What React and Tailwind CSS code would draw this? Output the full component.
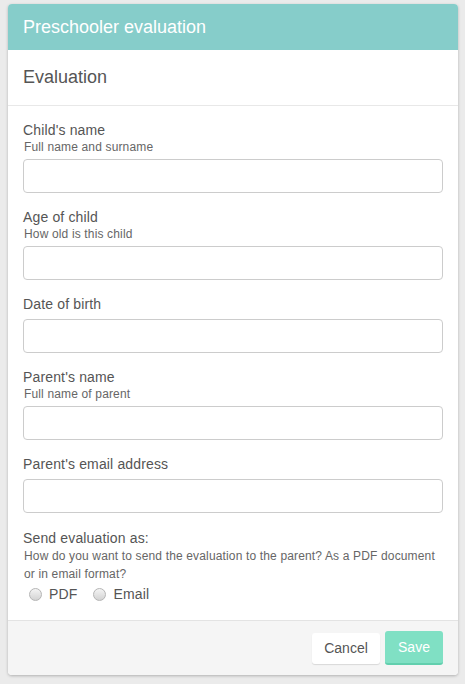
import { useState } from 'react';

const fields = [
  { label: "Child's name", help: 'Full name and surname' },
  { label: 'Age of child', help: 'How old is this child' },
  { label: 'Date of birth' },
  { label: "Parent's name", help: 'Full name of parent' },
  { label: "Parent's email address" },
];

function Radio({ label, checked, onClick }) {
  return (
    <label className="flex items-center cursor-pointer" onClick={onClick}>
      <span className="w-[13px] h-[13px] rounded-full border border-[#b5b5b5] bg-gradient-to-b from-[#f4f4f4] to-[#d3d3d3] flex items-center justify-center">
        {checked && <span className="w-[5px] h-[5px] rounded-full bg-[#555]" />}
      </span>
      <span className="ml-[7px] text-[14px] leading-[20px] tracking-[0.15px] text-[#555]">{label}</span>
    </label>
  );
}

export default function App() {
  const [format, setFormat] = useState('');

  return (
    <div
      className="w-[465px] h-[684px] bg-[#ebebeb] pt-[4px] pl-[8px]"
      style={{ fontFamily: '"Liberation Sans", Arial, sans-serif' }}
    >
      <div className="w-[450px] h-[671px] bg-white rounded-[4px] shadow-[0_1px_3px_rgba(0,0,0,0.25)] flex flex-col overflow-hidden">
        <div className="h-[46px] bg-[#86cdca] flex items-center px-[15px]">
          <h1 className="text-[18px] text-white">Preschooler evaluation</h1>
        </div>
        <div className="h-[56px] border-b border-[#e8e8e8] flex items-center px-[15px]">
          <h2 className="text-[18px] text-[#555]">Evaluation</h2>
        </div>

        <div className="flex-1 px-[15px] pt-[14px]">
          {fields.map((f) => (
            <div key={f.label} className="mb-[14px]">
              <div className="text-[14px] leading-[20px] tracking-[0.15px] text-[#555]">{f.label}</div>
              {f.help && (
                <div className="text-[12px] leading-[16px] tracking-[0.15px] text-[#666] -mt-[1px] ml-[1px]">{f.help}</div>
              )}
              <input
                className={`${f.help ? 'mt-[4px]' : 'mt-[5px]'} block w-full h-[34px] border border-[#ccc] rounded-[4px] px-2 text-[14px] outline-none`}
              />
            </div>
          ))}

          <div className="pt-[1px]">
            <div className="text-[14px] leading-[20px] tracking-[0.15px] text-[#555]">Send evaluation as:</div>
            <div className="text-[12px] leading-[18px] tracking-[0.15px] text-[#666] -mt-[1px] ml-[1px]">
              How do you want to send the evaluation to the parent? As a PDF document or in email format?
            </div>
            <div className="flex gap-[16px] ml-[6px] mt-[1px]">
              <Radio label="PDF" checked={format === 'pdf'} onClick={() => setFormat('pdf')} />
              <Radio label="Email" checked={format === 'email'} onClick={() => setFormat('email')} />
            </div>
          </div>
        </div>

        <div className="h-[55px] bg-[#f5f5f5] border-t border-[#e3e3e3] flex items-center justify-end gap-[5px] px-[15px]">
          <button className="h-[31px] w-[68px] bg-white rounded-[3px] shadow-[0_1px_1px_rgba(0,0,0,0.12)] text-[14px] text-[#555]">
            Cancel
          </button>
          <button className="h-[34px] w-[58px] bg-[#80e0c4] border-b-2 border-[#62cfae] rounded-[3px] text-[14px] text-white">
            Save
          </button>
        </div>
      </div>
    </div>
  );
}
